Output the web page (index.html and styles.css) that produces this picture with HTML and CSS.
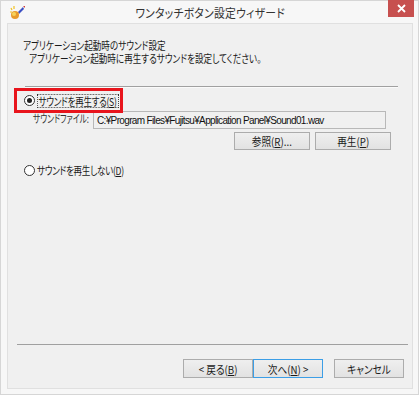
FILE: index.html
```html
<!DOCTYPE html>
<html lang="ja">
<head>
<meta charset="utf-8">
<link rel="stylesheet" href="styles.css">
</head>
<body>
<div class="window">
  <div class="titlebar">
    <svg class="appicon" width="16" height="16" viewBox="0 0 16 16">
      <path d="M9 7 L14 2 L15 4 L10 9 Z" fill="#3b4fc4"/>
      <path d="M14 1 L16 1 L16 3 Z" fill="#d23b3b"/>
      <circle cx="6" cy="10" r="4" fill="#e89a2c"/>
      <circle cx="5" cy="9" r="2" fill="#f6d25a"/>
      <path d="M2 3 L3 5 M5 1 L5 4 M1 7 L3 7" stroke="#f0c020" stroke-width="1.2"/>
    </svg>
    <div class="title"><span class="tcond">ワンタッチボタン設定ウィザード</span></div>
    <div class="close">
      <svg width="9" height="9" viewBox="0 0 9 9"><path d="M1 1 L8 8 M8 1 L1 8" stroke="#fff" stroke-width="1.8"/></svg>
    </div>
  </div>
  <div class="client">
    <div class="header">
      <div class="h1"><span class="cond">アプリケーション起動時のサウンド設定</span></div>
      <div class="h2"><span class="cond">アプリケーション起動時に再生するサウンドを設定してください。</span></div>
    </div>
    <div class="sep"></div>
    <div class="body">
      <div class="highlight">
        <span class="radio on"></span><span class="focus rcond">サウンドを再生する(<u>S</u>)</span>
      </div>
      <div class="filerow">
        <span class="flabel"><span class="lcond">サウンドファイル:</span></span>
        <div class="field">C:¥Program Files¥Fujitsu¥Application Panel¥Sound01.wav</div>
      </div>
      <div class="btnrow">
        <div class="btn"><span class="bcond">参照(<u>R</u>)...</span></div>
        <div class="btn"><span class="bcond">再生(<u>P</u>)</span></div>
      </div>
      <div class="radrow">
        <span class="radio"></span><span class="rcond">サウンドを再生しない(<u>D</u>)</span>
      </div>
    </div>
    <div class="sep2"></div>
    <div class="footer">
      <div class="btn wbtn"><span class="bcond">&lt; 戻る(<u>B</u>)</span></div>
      <div class="btn wbtn def"><span class="bcond">次へ(<u>N</u>) &gt;</span></div>
      <div class="btn wbtn cancel"><span class="bcond">キャンセル</span></div>
    </div>
  </div>
</div>
</body>
</html>
```
FILE: styles.css
```css
* { box-sizing: border-box; }
html, body { margin: 0; padding: 0; }
body {
  width: 419px; height: 395px; overflow: hidden;
  font-family: "Noto Sans CJK JP", "Noto Sans", sans-serif;
  font-feature-settings: "palt";
  font-size: 11px; color: #1a1a1a;
  background: #f7f7f7;
  white-space: nowrap;
}
.cond { display: inline-block; transform: scaleX(0.78); transform-origin: left center; }
.rcond { display: inline-block; flex: none; letter-spacing: -0.4px; transform: scaleX(0.78); transform-origin: left center; }
.lcond { display: inline-block; transform: scaleX(0.7); transform-origin: left center; }
.bcond { display: inline-block; transform: scaleX(0.88); transform-origin: center center; }
.tcond { display: inline-block; transform: scaleX(0.9); transform-origin: center center; }
.window {
  width: 419px; height: 395px;
  background: #f7f7f7;
  border: 1px solid #d6d6d6;
  display: flex; flex-direction: column;
  padding: 0 5px 5px 6px;
}
.titlebar {
  height: 22px; display: flex; align-items: flex-start; position: relative;
}
.appicon { margin: 4px 0 0 2px; }
.title {
  position: absolute; left: 0; right: 0; top: 3px; text-align: center;
  font-size: 12px; color: #333; letter-spacing: 0.3px;
}
.close {
  position: absolute; right: -1px; top: -1px; width: 26px; height: 17px;
  background: #c7504f; display: flex; align-items: center; justify-content: center;
}
.client {
  flex: 1; background: #f0f0f0; border: 1px solid #e0e0e0;
  display: flex; flex-direction: column;
}
.header { padding: 15px 0 0 15px; line-height: 13px; }
.h2 { padding-left: 6px; }
.sep { margin: 21px 14px 0 17px; background: #a0a0a0; border-bottom: 1px solid #fafafa; height: 2px; }
.body { padding: 0 0 0 6px; flex: 1; }
.highlight {
  width: 109px; height: 25px; border: 3px solid #e8141c;
  display: flex; align-items: center; padding-left: 7px;
  position: relative; z-index: 1;
}
.radio {
  width: 11px; height: 11px; border-radius: 50%; border: 1px solid #333;
  background: #fff; display: inline-block; margin-right: 2px; position: relative; flex: none;
}
.radio.on::after {
  content: ""; position: absolute; left: 2px; top: 2px; width: 5px; height: 5px; border-radius: 50%; background: #222;
}
.focus { border: 1px dotted #333; padding: 0 2px 0 1px; line-height: 12px; }
.filerow { display: flex; align-items: flex-start; margin-top: -2px; padding-left: 19px; }
.flabel { padding-top: 1px; line-height: 12px; width: 60px; color: #333; }
.field {
  width: 293px; height: 18px; border: 1px solid #b8b8b8; background: #f0f0f0;
  padding: 2px 0 0 3px; font-family: "Liberation Sans", "Noto Sans CJK JP", sans-serif; font-size: 10px; line-height: 13px;
  letter-spacing: -0.65px; color: #111;
}
.btnrow { display: flex; justify-content: flex-end; gap: 5px; margin: 3px 21px 0 0; }
.btn {
  width: 76px; height: 18px; border: 1px solid #acacac;
  background: linear-gradient(#efefef, #e2e2e2);
  display: flex; align-items: center; justify-content: center; line-height: 12px;
}
.radrow { display: flex; align-items: center; margin-top: 14px; padding-left: 10px; line-height: 12px; }
.sep2 { margin: 0 4px 0 9px; height: 1px; background: #a0a0a0; }
.footer { display: flex; padding: 14px 0 0 175px; height: 43px; }
.wbtn { width: 70px; height: 19px; }
.def { border-color: #3c9ee6; }
.cancel { margin-left: 11px; }
```
